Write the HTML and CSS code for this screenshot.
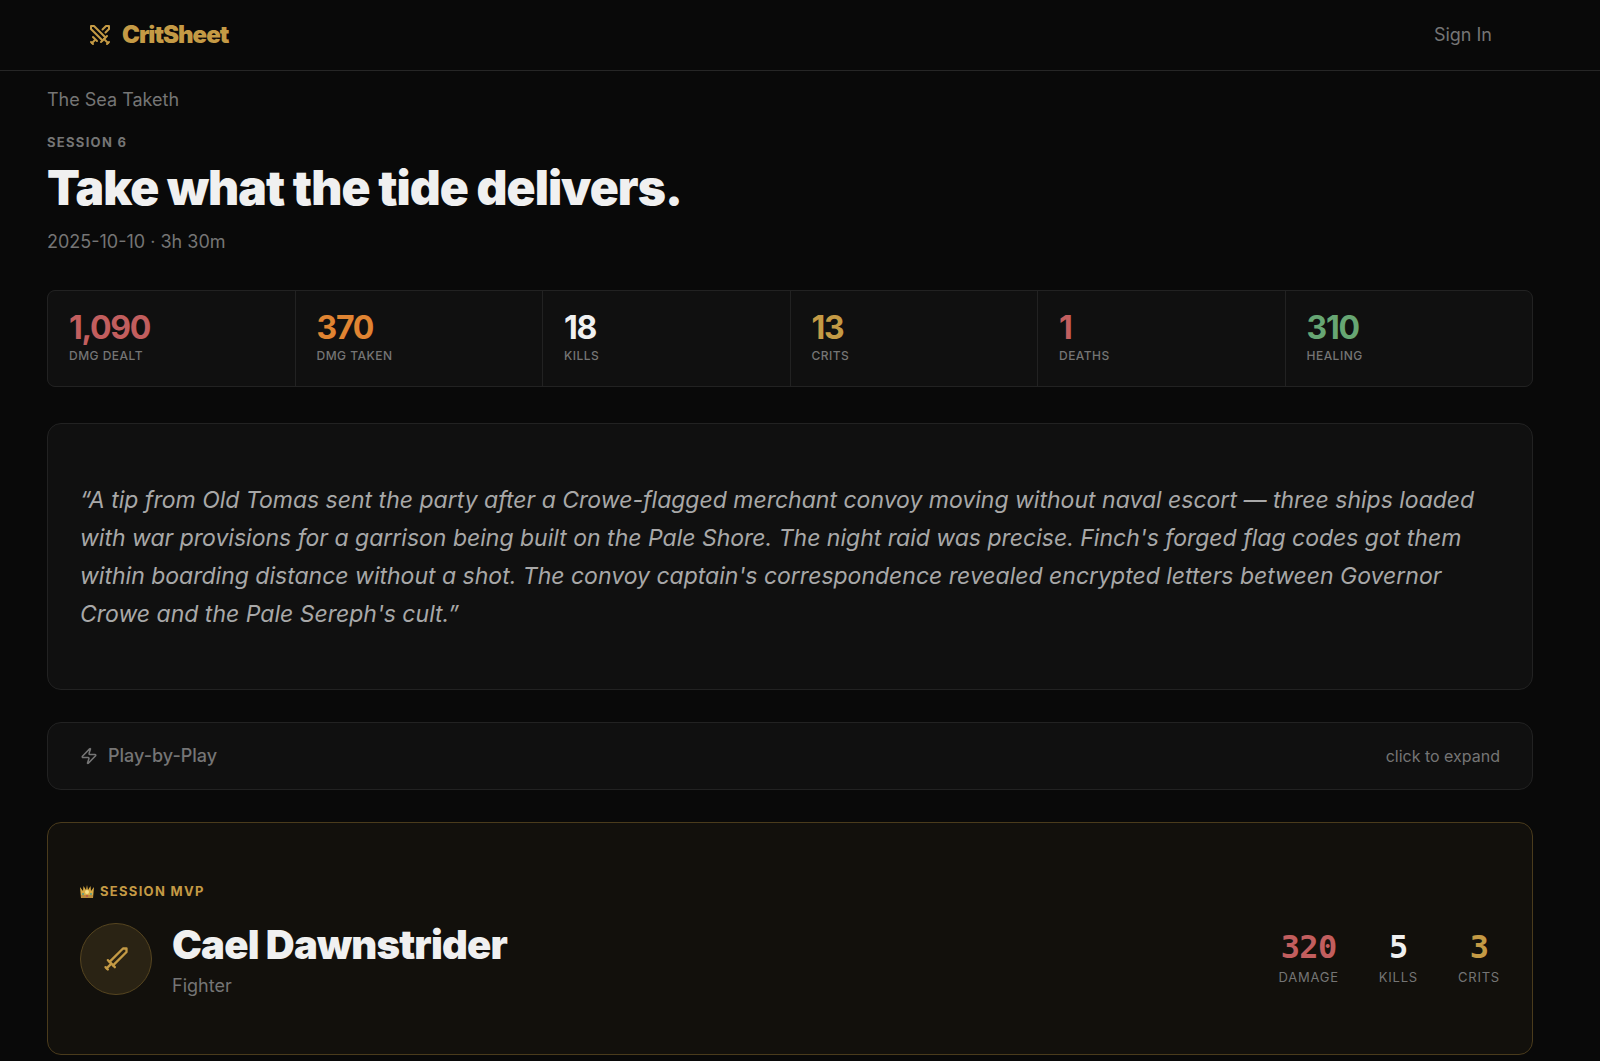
FILE: index.html
```html
<!DOCTYPE html>
<html lang="en">

<head>
  <meta charset="UTF-8" />
  <meta name="viewport" content="width=device-width, initial-scale=1.0" />
  <title>Take what the tide delivers. | CritSheet</title>
  <link rel="stylesheet" href="styles.css">
</head>

<body>
  <header class="navbar">
    <a class="brand" href="#">
      <svg class="brand-icon" viewBox="0 0 24 24" aria-hidden="true">
        <path d="M14.5 17.5 3 6V3h3l11.5 11.5" />
        <path d="m13 19 6-6" />
        <path d="m16 16 4 4" />
        <path d="m19 21 2-2" />
        <path d="M14.5 6.5 18 3h3v3l-3.5 3.5" />
        <path d="m5 14 4 4" />
        <path d="m7 17-3 3" />
        <path d="m3 19 2 2" />
      </svg>
      CritSheet
    </a>
    <a class="sign-in" href="#">Sign In</a>
  </header>

  <main class="page">
    <a class="campaign" href="#">The Sea Taketh</a>
    <p class="eyebrow">Session 6</p>
    <h1 class="title">Take what the tide delivers.</h1>
    <p class="meta">2025-10-10 · 3h 30m</p>

    <dl class="stats">
      <div class="stat">
        <dd class="stat-value red">1,090</dd>
        <dt class="stat-label">Dmg Dealt</dt>
      </div>
      <div class="stat">
        <dd class="stat-value orange">370</dd>
        <dt class="stat-label">Dmg Taken</dt>
      </div>
      <div class="stat">
        <dd class="stat-value">18</dd>
        <dt class="stat-label">Kills</dt>
      </div>
      <div class="stat">
        <dd class="stat-value gold">13</dd>
        <dt class="stat-label">Crits</dt>
      </div>
      <div class="stat">
        <dd class="stat-value red">1</dd>
        <dt class="stat-label">Deaths</dt>
      </div>
      <div class="stat">
        <dd class="stat-value green">310</dd>
        <dt class="stat-label">Healing</dt>
      </div>
    </dl>

    <blockquote class="card quote">“A tip from Old Tomas sent the party after a Crowe-flagged merchant convoy moving without naval escort — three ships loaded with war provisions for a garrison being built on the Pale Shore. The night raid was precise. Finch's forged flag codes got them within boarding distance without a shot. The convoy captain's correspondence revealed encrypted letters between Governor Crowe and the Pale Sereph's cult.”</blockquote>

    <button class="card expander" type="button">
      <svg class="bolt" viewBox="0 0 24 24" aria-hidden="true">
        <path d="M4 14a1 1 0 0 1-.78-1.63l9.9-10.2a.5.5 0 0 1 .86.46l-1.92 6.02A1 1 0 0 0 13 10h7a1 1 0 0 1 .78 1.63l-9.9 10.2a.5.5 0 0 1-.86-.46l1.92-6.02A1 1 0 0 0 11 14z" />
      </svg>
      <span class="expander-title">Play-by-Play</span>
      <span class="expander-hint">click to expand</span>
    </button>

    <section class="card mvp">
      <p class="mvp-tag">
        <svg class="crown" viewBox="1 0 14 13" aria-hidden="true">
          <path d="M1 2 4 6 4.500 1 7 5 8 0 9 5 11.500 1 12 6 15 2 14 13H2z" fill="#d9ab45" />
          <path d="M2 10h12l-.3 3H2.300z" fill="#b98a3c" />
          <circle cx="8" cy="7" r="2" fill="#f5e08a" />
          <circle cx="4" cy="9" r="1" fill="#4f9a8c" />
          <circle cx="12" cy="9" r="1" fill="#4f9a8c" />
          <circle cx="8" cy="11" r="1" fill="#b8524f" />
        </svg>
        Session MVP
      </p>
      <div class="mvp-row">
        <div class="avatar">
          <svg class="sword" viewBox="0 0 24 24" aria-hidden="true">
            <path d="m11 19-6-6" />
            <path d="m5 21-2-2" />
            <path d="m8 16-4 4" />
            <path d="M9.500 17.500 21 6V3h-3L6.500 14.500" />
          </svg>
        </div>
        <div class="mvp-who">
          <h2 class="mvp-name">Cael Dawnstrider</h2>
          <p class="mvp-class">Fighter</p>
        </div>
        <dl class="mvp-stats">
          <div class="mvp-stat">
            <dd class="mvp-value red">320</dd>
            <dt class="mvp-label">Damage</dt>
          </div>
          <div class="mvp-stat">
            <dd class="mvp-value">5</dd>
            <dt class="mvp-label">Kills</dt>
          </div>
          <div class="mvp-stat">
            <dd class="mvp-value gold">3</dd>
            <dt class="mvp-label">Crits</dt>
          </div>
        </dl>
      </div>
    </section>
  </main>
</body>

</html>
```
FILE: styles.css
```css
* {
  box-sizing: border-box;
}

body {
  margin: 0;
  background-color: #090909;
  color: #f0f0f0;
  font-family: Inter, "Liberation Sans", sans-serif;
  font-size: 18px;
  line-height: 24px;
}

h1,
h2,
p,
dl,
dd,
blockquote {
  margin: 0;
}

a {
  color: inherit;
  text-decoration: none;
}

svg {
  fill: none;
  stroke: currentColor;
  stroke-width: 2;
  stroke-linecap: round;
  stroke-linejoin: round;
}

.red {
  color: #c25e5e;
}

.orange {
  color: #e08432;
}

.gold {
  color: #c49a45;
}

.green {
  color: #67a673;
}

.navbar {
  display: flex;
  align-items: center;
  justify-content: space-between;
  height: 71px;
  padding: 0 108px 0 88px;
  border-bottom: 1px solid #262626;
}

.brand {
  display: flex;
  align-items: center;
  gap: 10px;
  color: #c49a45;
  font-size: 24px;
  font-weight: 900;
  letter-spacing: -1px;
}

.brand-icon {
  width: 24px;
  height: 24px;
}

.sign-in {
  color: #757575;
}

.page {
  padding: 17px 67px 6px 47px;
}

.campaign,
.meta {
  display: block;
  color: #757575;
}

.eyebrow {
  margin-top: 18px;
  color: #757575;
  font-size: 13px;
  font-weight: 700;
  line-height: 24px;
  letter-spacing: 0.1em;
  text-transform: uppercase;
}

.title {
  margin: 6px 0 14px;
  font-size: 48px;
  font-weight: 900;
  line-height: 56px;
  letter-spacing: -0.02em;
}

.stats {
  display: grid;
  grid-template-columns: repeat(6, 1fr);
  gap: 1px;
  margin: 36px 0;
  overflow: hidden;
  background-color: #222;
  border: 1px solid #222;
  border-radius: 8px;
}

.stat {
  display: flex;
  flex-direction: column;
  padding: 19px 21px 20px;
  background-color: #101010;
}

.stat-value {
  font-size: 32px;
  font-weight: 700;
  line-height: 36px;
  letter-spacing: -0.04em;
}

.stat-label {
  color: #757575;
  font-size: 12px;
  font-weight: 500;
  line-height: 20px;
  letter-spacing: 0.04em;
  text-transform: uppercase;
}

.card {
  margin-bottom: 32px;
  padding: 57px 32px 56px;
  background-color: #101010;
  border: 1px solid #222;
  border-radius: 14px;
}

.quote {
  color: #a8a8a8;
  font-size: 23px;
  font-style: italic;
  line-height: 38px;
}

.expander {
  display: flex;
  align-items: center;
  gap: 10px;
  width: 100%;
  padding: 21px 32px;
  color: #757575;
  font: inherit;
  text-align: left;
  cursor: pointer;
}

.bolt {
  width: 18px;
  height: 18px;
}

.expander-title {
  flex: 1;
  font-weight: 500;
}

.expander-hint {
  font-size: 16px;
}

.mvp {
  margin-bottom: 0;
  background-color: #12100c;
  border-color: #4a3b1c;
}

.mvp-tag {
  display: flex;
  align-items: center;
  gap: 6px;
  margin-bottom: 18px;
  color: #c49a45;
  font-size: 13px;
  font-weight: 700;
  line-height: 22px;
  letter-spacing: 0.1em;
  text-transform: uppercase;
}

.crown {
  width: 14px;
  height: 13px;
  stroke: none;
}

.mvp-row {
  display: flex;
  align-items: center;
  gap: 20px;
}

.avatar {
  display: flex;
  align-items: center;
  justify-content: center;
  width: 72px;
  height: 72px;
  color: #c49a45;
  background-color: #2a2314;
  border: 1px solid #564520;
  border-radius: 50%;
}

.sword {
  width: 28px;
  height: 28px;
}

.mvp-who {
  flex: 1;
}

.mvp-name {
  margin-bottom: 4px;
  font-size: 40px;
  font-weight: 900;
  line-height: 50px;
  letter-spacing: -0.02em;
}

.mvp-class {
  color: #757575;
}

.mvp-stats {
  display: flex;
  gap: 40px;
  text-align: center;
}

.mvp-stat {
  display: flex;
  flex-direction: column;
}

.mvp-value {
  font-family: "DejaVu Sans Mono", monospace;
  font-size: 32px;
  font-weight: 700;
  line-height: 36px;
  letter-spacing: -0.02em;
}

.mvp-label {
  color: #757575;
  font-size: 13px;
  line-height: 24px;
  letter-spacing: 0.06em;
  text-transform: uppercase;
}
```
